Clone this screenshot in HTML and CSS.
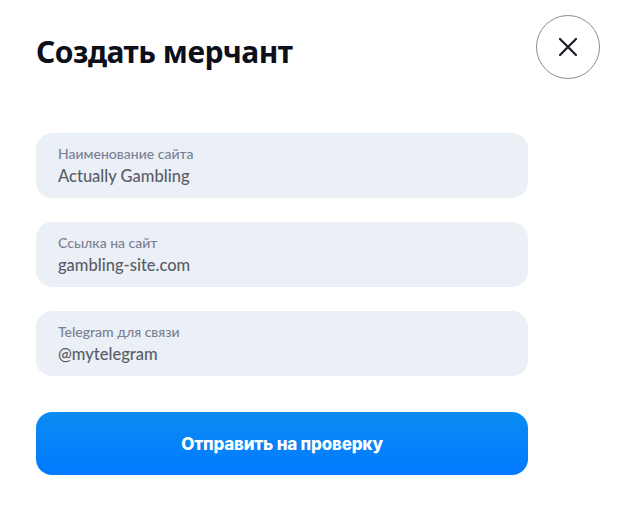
FILE: index.html
```html
<!DOCTYPE html>
<html>
<head>
  <meta charset="UTF-8">
  <link rel="stylesheet" href="styles.css">
  <title>Создать мерчант</title>
</head>
<body>
  <div class="modal">
    <div class="modal-head">
      <h1 class="modal-title">Создать мерчант</h1>
      <button class="close-btn" aria-label="Закрыть">
        <svg width="22" height="22" viewBox="0 0 22 22">
          <path d="M3 3 L19 19 M19 3 L3 19" stroke="#1a1a24" stroke-width="2.2" stroke-linecap="round"/>
        </svg>
      </button>
    </div>

    <form class="merchant-form">
      <label class="field">
        <span class="field-label">Наименование сайта</span>
        <input class="field-input" type="text" value="Actually Gambling">
      </label>
      <label class="field">
        <span class="field-label">Ссылка на сайт</span>
        <input class="field-input" type="text" value="gambling-site.com">
      </label>
      <label class="field">
        <span class="field-label">Telegram для связи</span>
        <input class="field-input" type="text" value="@mytelegram">
      </label>

      <button type="button" class="submit-btn">Отправить на проверку</button>
    </form>
  </div>
</body>
</html>
```

FILE: styles.css
```css
body {
  margin: 0;
  background: #fff;
  font-family: "Lato", "Noto Sans", sans-serif;
}

.modal {
  width: 622px;
  padding: 15px 22px 0 36px;
  box-sizing: border-box;
}

.modal-head {
  display: flex;
  justify-content: space-between;
  align-items: flex-start;
}

.modal-title {
  margin: 16px 0 0;
  font-family: "Noto Sans", sans-serif;
  font-size: 30px;
  font-weight: 700;
  color: #0d0f1a;
  letter-spacing: -0.5px;
}

.close-btn {
  width: 64px;
  height: 64px;
  border-radius: 50%;
  border: 1px solid #8c8c9e;
  background: #fff;
  display: flex;
  align-items: center;
  justify-content: center;
  padding: 0;
  cursor: pointer;
}

.merchant-form {
  display: flex;
  flex-direction: column;
  gap: 24px;
  width: 492px;
  margin-top: 54px;
}

.field {
  display: flex;
  flex-direction: column;
  height: 65px;
  box-sizing: border-box;
  padding: 12px 22px 0;
  background: #ebeff6;
  border-radius: 16px;
}

.field-label {
  font-size: 14px;
  font-weight: 500;
  color: #7a7f92;
  line-height: 17px;
}

.field-input {
  border: none;
  background: transparent;
  padding: 0;
  margin-top: 4px;
  font-family: "Lato", sans-serif;
  font-size: 16.5px;
  font-weight: 500;
  color: #5a5d69;
  outline: none;
}

.submit-btn {
  margin-top: 12px;
  height: 63px;
  border: none;
  border-radius: 16px;
  background: linear-gradient(180deg, #0b8cf3, #0279ff);
  color: #fff;
  font-family: "Inter", sans-serif;
  font-size: 17px;
  font-weight: 800;
  letter-spacing: -0.2px;
  cursor: pointer;
}
```
